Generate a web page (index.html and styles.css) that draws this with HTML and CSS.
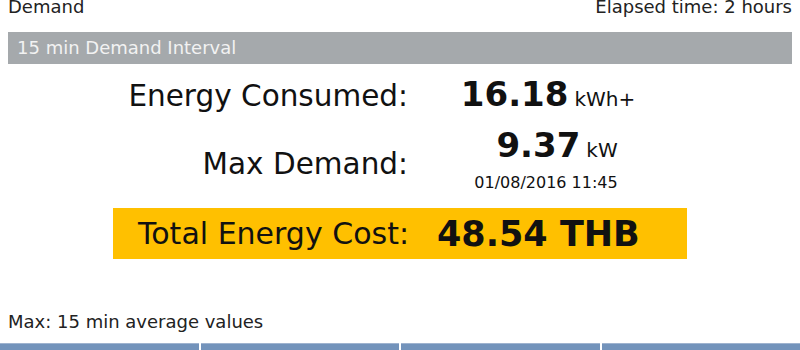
FILE: index.html
```html
<!DOCTYPE html>
<html lang="en">
<head>
    <meta charset="UTF-8">
    <meta name="viewport" content="width=device-width, initial-scale=1.0">
    <title>Demand</title>
    <link rel="stylesheet" href="styles.css">
</head>
<body>
    <div class="page">
        <div class="header">
            <span>Demand</span>
            <span>Elapsed time: 2 hours</span>
        </div>

        <div class="interval-bar">15 min Demand Interval</div>

        <div class="reading">
            <div class="label">Energy Consumed:</div>
            <div class="value">
                <span class="number">16.18</span><span class="unit">kWh+</span>
            </div>
        </div>

        <div class="reading reading-demand">
            <div class="label">Max Demand:</div>
            <div class="value">
                <div class="demand-block">
                    <div><span class="number">9.37</span><span class="unit">kW</span></div>
                    <div class="timestamp">01/08/2016 11:45</div>
                </div>
            </div>
        </div>

        <div class="cost-box">
            <div class="cost-label">Total Energy Cost:</div>
            <div class="cost-value">48.54 THB</div>
        </div>

        <div class="footnote">Max: 15 min average values</div>
    </div>

    <div class="tabs">
        <div class="tab"></div>
        <div class="tab"></div>
        <div class="tab"></div>
        <div class="tab"></div>
    </div>
</body>
</html>
```

FILE: styles.css
```css
body {
    margin: 0;
    font-family: "DejaVu Sans", "Liberation Sans", sans-serif;
    color: #111;
    background: #fff;
    width: 800px;
    height: 350px;
    overflow: hidden;
}

.page {
    padding: 0 8px;
}

.header {
    display: flex;
    justify-content: space-between;
    font-size: 18px;
    line-height: 21px;
    margin-top: -4px;
    color: #222;
}

.interval-bar {
    margin-top: 15px;
    height: 32px;
    line-height: 32px;
    padding-left: 9px;
    background-color: #a5a9ac;
    color: #f2f2f2;
    font-size: 18px;
}

/* readings */
.reading {
    display: grid;
    grid-template-columns: 400px 200px;
    column-gap: 40px;
    align-items: baseline;
    margin-top: 10px;
}

.reading-demand {
    align-items: center;
    margin-top: 4px;
}

.label {
    text-align: right;
    font-size: 29.5px;
    line-height: 34px;
}

.value {
    text-align: center;
    line-height: 40px;
}

.number {
    font-size: 34px;
    font-weight: bold;
}

.unit {
    font-size: 20px;
    line-height: 1;
    margin-left: 6px;
}

.demand-block {
    display: inline-block;
    text-align: right;
    margin-right: 4px;
}

.timestamp {
    font-size: 16px;
    line-height: 22px;
}

/* cost */
.cost-box {
    display: grid;
    grid-template-columns: 296px auto;
    column-gap: 28px;
    align-items: center;
    width: 574px;
    height: 51px;
    margin: 5px auto 0;
    background-color: #ffc000;
}

.cost-label {
    text-align: right;
    font-size: 30px;
}

.cost-value {
    font-size: 35px;
    font-weight: bold;
}

.footnote {
    margin-top: 52px;
    font-size: 18px;
    line-height: 21px;
    color: #222;
}

.tabs {
    display: flex;
    gap: 2px;
    margin-top: 11px;
}

.tab {
    flex: 1;
    height: 6px;
    background-color: #7393bb;
    border-top: 1px solid #9fb3cf;
}
```
